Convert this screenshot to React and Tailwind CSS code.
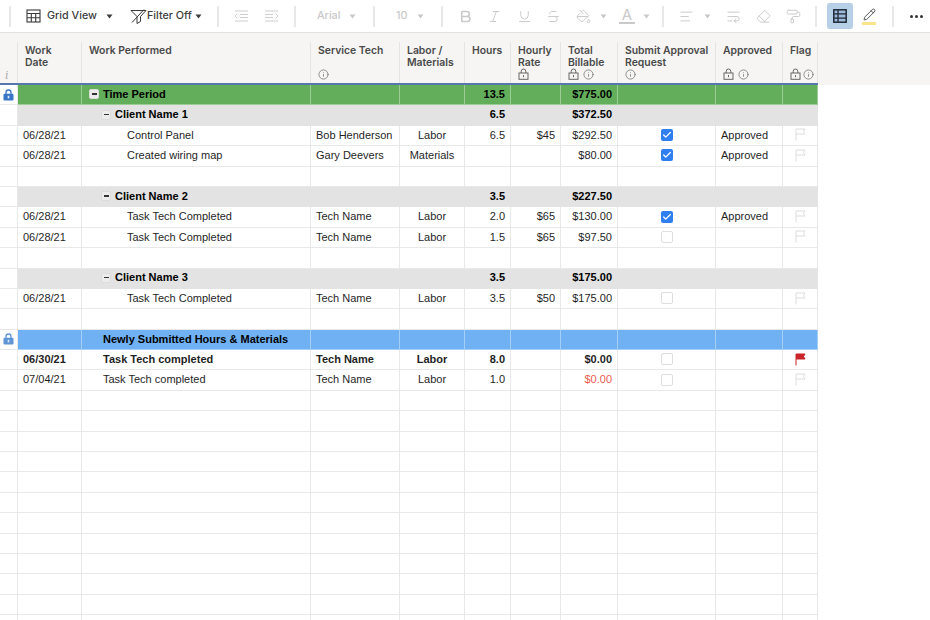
import { Bold, Italic, Underline, Strikethrough, PaintBucket, AlignLeft, WrapText, Eraser, PaintRoller, Pencil, Info, Check } from "lucide-react";

const fontArial = "font-['Liberation_Sans',Arial,sans-serif]";

function Sep() {
  return <div className="w-[2px] h-[21px] bg-[#e8e8e8] shrink-0" />;
}

function Caret({ className = "" }) {
  return (
    <svg width="7" height="5" viewBox="0 0 7 5" className={`shrink-0 ${className}`}>
      <path d="M0.5 0.5h6L3.5 4.5z" fill="currentColor" />
    </svg>
  );
}

function GridIcon() {
  return (
    <svg width="15" height="14" viewBox="0 0 15 14" fill="none" stroke="#3a3a3a" strokeWidth="1.1" className="shrink-0">
      <rect x="1" y="1" width="13" height="12" />
      <path d="M1 4.5h13M1 8.7h13M5.3 4.5V13M9.7 4.5V13" />
    </svg>
  );
}

function FilterOffIcon() {
  return (
    <svg width="17" height="15" viewBox="0 0 17 15" fill="none" stroke="#3a3a3a" strokeWidth="1" className="shrink-0">
      <path d="M1 1.5h15l-5.5 6v5l-3.500 2v-7z" />
      <path d="M2 13.500L14 0.500" />
    </svg>
  );
}

function IndentIcon({ right }) {
  return (
    <svg width="15" height="12" viewBox="0 0 15 12" fill="none" stroke="#cfcfcf" strokeWidth="1" className="shrink-0">
      <path d="M1 1h13M1 11h13" />
      {right ? <path d="M1 4.500h8M1 7.500h8M11.500 3.500L14 6l-2.500 2.500" /> : <path d="M6 4.500h8M6 7.500h8M3.500 3.500L1 6l2.500 2.500" />}
    </svg>
  );
}

function SheetIcon() {
  return (
    <svg width="14" height="14" viewBox="0 0 14 14" className="shrink-0">
      <rect x="0.800" y="0.800" width="12.400" height="12.400" fill="#9fb9d8" stroke="#1f2937" strokeWidth="1.500" />
      <path d="M5 1v12M1 4.900h12M1 9.100h12" stroke="#1f2937" strokeWidth="1.300" />
    </svg>
  );
}

function LockIcon({ color = "#666", solid }) {
  if (solid) {
    return (
      <svg width="11" height="12" viewBox="0 0 11 12" className="shrink-0">
        <path d="M3 5V3.500a2.500 2.500 0 0 1 5 0V5" fill="none" stroke={color} strokeWidth="1.300" />
        <rect x="0.500" y="4.800" width="10" height="6.700" rx="1" fill={color} />
        <rect x="4.700" y="6.800" width="1.600" height="2.600" fill="#dbe7f6" />
      </svg>
    );
  }
  return (
    <svg width="11" height="12" viewBox="0 0 11 12" fill="none" stroke={color} strokeWidth="1" className="shrink-0">
      <path d="M3.200 5V3.300a2.300 2.300 0 0 1 4.600 0V5" />
      <rect x="1" y="5" width="9" height="6.300" />
      <path d="M5.500 7v2.200" />
    </svg>
  );
}

function Toolbar() {
  const faded = "w-[15px] h-[15px] text-[#c9c9c9] shrink-0";
  const label = "text-[10.750px] font-medium whitespace-nowrap";
  return (
    <div className="h-[33px] flex items-center pl-[9px] border-b border-[#e2e2e2] bg-white">
      <Sep />
      <div className="ml-[15px] flex items-center text-[#3d3d3d]">
        <GridIcon />
        <span className={`ml-[6px] w-[50px] ${label}`}>Grid View</span>
        <Caret className="ml-[9px]" />
        <div className="ml-[17px]"><FilterOffIcon /></div>
        <span className={`w-[45px] ${label}`}>Filter Off</span>
        <Caret className="ml-[3px]" />
      </div>
      <div className="ml-[15px]"><Sep /></div>
      <div className="ml-[15px] flex items-center gap-[15px]">
        <IndentIcon />
        <IndentIcon right />
      </div>
      <div className="ml-[15px]"><Sep /></div>
      <div className="ml-[21px] flex items-center text-[#c9c9c9]">
        <span className={`w-[24px] ${label}`}>Arial</span>
        <Caret className="ml-[8px]" />
      </div>
      <div className="ml-[17px]"><Sep /></div>
      <div className="ml-[21px] flex items-center text-[#c9c9c9]">
        <span className={`w-[12px] ${label}`}>10</span>
        <Caret className="ml-[9px]" />
      </div>
      <div className="ml-[17px]"><Sep /></div>
      <div className="ml-[15px] flex items-center">
        <Bold className={faded} strokeWidth={2.500} />
        <Italic className={`${faded} ml-[14px]`} strokeWidth={1.500} />
        <Underline className={`${faded} ml-[15px]`} strokeWidth={1.500} />
        <Strikethrough className={`${faded} ml-[14px]`} strokeWidth={1.500} />
        <PaintBucket className={`${faded} ml-[15px]`} strokeWidth={1.500} />
        <Caret className="ml-[9px] text-[#c9c9c9]" />
        <div className="ml-[12px] w-[16px] flex flex-col items-center text-[#c9c9c9]">
          <span className="text-[15px] leading-[14px]">A</span>
          <div className="w-[16px] h-[2px] bg-[#c9c9c9]" />
        </div>
        <Caret className="ml-[8px] text-[#c9c9c9]" />
      </div>
      <div className="ml-[12px]"><Sep /></div>
      <div className="ml-[15px] flex items-center">
        <AlignLeft className={faded} strokeWidth={1.500} />
        <Caret className="ml-[10px] text-[#c9c9c9]" />
        <WrapText className={`${faded} ml-[15px]`} strokeWidth={1.500} />
        <Eraser className={`${faded} ml-[15px]`} strokeWidth={1.500} />
        <PaintRoller className={`${faded} ml-[15px]`} strokeWidth={1.500} />
      </div>
      <div className="ml-[14px]"><Sep /></div>
      <div className="ml-[10px] w-[26px] h-[26px] rounded-[3px] bg-[#b8cfe8] flex items-center justify-center">
        <SheetIcon />
      </div>
      <div className="ml-[9px] w-[14px] flex flex-col items-center">
        <Pencil className="w-[13px] h-[13px] text-[#333]" strokeWidth={1.500} />
        <div className="w-[14px] h-[3px] mt-[1px] bg-[#fbe58c]" />
      </div>
      <div className="ml-[16px]"><Sep /></div>
      <div className="ml-[16px] flex items-center gap-[2px]">
        <div className="w-[3px] h-[3px] rounded-full bg-[#333]" />
        <div className="w-[3px] h-[3px] rounded-full bg-[#333]" />
        <div className="w-[3px] h-[3px] rounded-full bg-[#333]" />
      </div>
    </div>
  );
}

const gridCols = "grid grid-cols-[18px_64px_229px_89px_65px_46px_50px_57px_98px_67px_35px] w-[818px]";

const headers = [
  { label: "Work\nDate" },
  { label: "Work Performed" },
  { label: "Service Tech", info: true },
  { label: "Labor /\nMaterials" },
  { label: "Hours" },
  { label: "Hourly\nRate", lock: true },
  { label: "Total\nBillable", lock: true, info: true },
  { label: "Submit Approval\nRequest", info: true },
  { label: "Approved", lock: true, info: true },
  { label: "Flag", lock: true, info: true, tight: true },
];

function HeaderIcons({ lock, info, tight }) {
  return (
    <div className={`absolute bottom-[3px] flex items-center text-[#666] ${tight ? "left-[7px] gap-[2px]" : "left-[7px] gap-[4px]"}`}>
      {lock && <LockIcon />}
      {info && <Info className="w-[11px] h-[11px]" strokeWidth={1.500} />}
    </div>
  );
}

function Header() {
  return (
    <div className="bg-[#f6f5f4] w-full h-[52px] relative">
      <div className="absolute left-0 right-[112px] bottom-0 h-[2px] bg-[#5878ad]" />
      <div className={`${gridCols} h-[50px] pt-[9px]`}>
        <div className="relative border-r border-[#e4e4e4]">
          <span className="absolute left-[5px] bottom-[2px] font-serif italic text-[13px] leading-none text-[#b0b0b0]">i</span>
        </div>
        {headers.map((h) => (
          <div key={h.label} className="relative border-r border-[#e4e4e4] pl-[7px] pr-[2px] pt-[3px] text-[10.400px] leading-[12px] font-semibold text-[#4a4a4a] whitespace-pre-line">
            {h.label}
            <HeaderIcons lock={h.lock} info={h.info} tight={h.tight} />
          </div>
        ))}
      </div>
    </div>
  );
}

function Collapse() {
  return (
    <div className="w-[10px] h-[10px] rounded-[2px] bg-[#ececec] border border-[#dcdcdc] flex items-center justify-center shrink-0">
      <div className="w-[5px] h-[1.500px] bg-[#333]" />
    </div>
  );
}

function Checkbox({ checked }) {
  if (checked) {
    return (
      <div className="w-[12px] h-[12px] rounded-[2px] bg-[#2f7ff0] flex items-center justify-center">
        <Check className="w-[10px] h-[10px] text-white" strokeWidth={3} />
      </div>
    );
  }
  return <div className="w-[12px] h-[12px] rounded-[2px] border-[1.500px] border-[#dedede] bg-white" />;
}

function Flag({ on }) {
  return (
    <svg width="11" height="13" viewBox="0 0 11 13" fill={on ? "#c9252b" : "none"} stroke={on ? "#c9252b" : "#dcdcdc"} strokeWidth="1">
      <path d="M1 12.500V1h9l-1.500 2.500L10 6H1" />
    </svg>
  );
}

const tones = {
  plain: "bg-white border-[#e8e8e8] text-[#1f1f1f]",
  green: "bg-[#62ae5a] border-[#9ccd96] text-black font-bold",
  gray: "bg-[#e3e3e3] border-[#e3e3e3] text-black font-bold",
  blue: "bg-[#6fb1f3] border-[#a5cff8] text-black font-bold",
};

function Row({ tone = "plain", bold, date, work, indent = 0, collapse, tech, type, hours, rate, total, totalRed, check, approved, flag, lock }) {
  const cell = `${tones[tone]} border-r border-b flex items-center overflow-hidden whitespace-nowrap pb-[1px]`;
  const showBoxes = check !== undefined;
  const weight = bold ? "font-bold" : "";
  return (
    <div className={`${gridCols} h-[20.400px] text-[11px] ${fontArial}`}>
      <div className="bg-white border-r border-b border-[#e8e8e8] flex items-center justify-center">
        {lock && <LockIcon color={lock} solid />}
      </div>
      <div className={`${cell} ${weight} pl-[5px]`}>{date}</div>
      <div className={`${cell} ${weight}`}>
        <div className="flex items-center gap-[4px]" style={{ paddingLeft: 7 + indent }}>
          {collapse && <Collapse />}
          <span>{work}</span>
        </div>
      </div>
      <div className={`${cell} ${weight} pl-[5px]`}>{tech}</div>
      <div className={`${cell} ${weight} justify-center`}>{type}</div>
      <div className={`${cell} ${weight} justify-end pr-[5px]`}>{hours}</div>
      <div className={`${cell} ${weight} justify-end pr-[5px]`}>{rate}</div>
      <div className={`${cell} ${weight} justify-end pr-[5px] ${totalRed ? "text-[#ec5b50]" : ""}`}>{total}</div>
      <div className={`${cell} justify-center`}>{showBoxes && <Checkbox checked={check} />}</div>
      <div className={`${cell} pl-[5px]`}>{approved}</div>
      <div className={`${cell} justify-center`}>{flag !== undefined && <Flag on={flag} />}</div>
    </div>
  );
}

const rows = [
  { tone: "green", lock: "#3a76c8", work: "Time Period", collapse: true, hours: "13.5", total: "$775.00" },
  { tone: "gray", work: "Client Name 1", collapse: true, indent: 12, hours: "6.5", total: "$372.50" },
  { date: "06/28/21", work: "Control Panel", indent: 38, tech: "Bob Henderson", type: "Labor", hours: "6.5", rate: "$45", total: "$292.50", check: true, approved: "Approved", flag: false },
  { date: "06/28/21", work: "Created wiring map", indent: 38, tech: "Gary Deevers", type: "Materials", total: "$80.00", check: true, approved: "Approved", flag: false },
  {},
  { tone: "gray", work: "Client Name 2", collapse: true, indent: 12, hours: "3.5", total: "$227.50" },
  { date: "06/28/21", work: "Task Tech Completed", indent: 38, tech: "Tech Name", type: "Labor", hours: "2.0", rate: "$65", total: "$130.00", check: true, approved: "Approved", flag: false },
  { date: "06/28/21", work: "Task Tech Completed", indent: 38, tech: "Tech Name", type: "Labor", hours: "1.5", rate: "$65", total: "$97.50", check: false, flag: false },
  {},
  { tone: "gray", work: "Client Name 3", collapse: true, indent: 12, hours: "3.5", total: "$175.00" },
  { date: "06/28/21", work: "Task Tech Completed", indent: 38, tech: "Tech Name", type: "Labor", hours: "3.5", rate: "$50", total: "$175.00", check: false, flag: false },
  {},
  { tone: "blue", lock: "#5f94d6", work: "Newly Submitted Hours & Materials", indent: 14 },
  { bold: true, date: "06/30/21", work: "Task Tech completed", indent: 14, tech: "Tech Name", type: "Labor", hours: "8.0", total: "$0.00", check: false, flag: true },
  { date: "07/04/21", work: "Task Tech completed", indent: 14, tech: "Tech Name", type: "Labor", hours: "1.0", total: "$0.00", totalRed: true, check: false, flag: false },
];

export default function App() {
  const blanks = Array.from({ length: 12 }, (_, i) => i);
  return (
    <div className="w-[930px] h-[620px] overflow-hidden bg-white font-['Inter',sans-serif]">
      <Toolbar />
      <Header />
      {rows.map((r, i) => <Row key={i} {...r} />)}
      {blanks.map((i) => <Row key={`blank-${i}`} />)}
    </div>
  );
}
